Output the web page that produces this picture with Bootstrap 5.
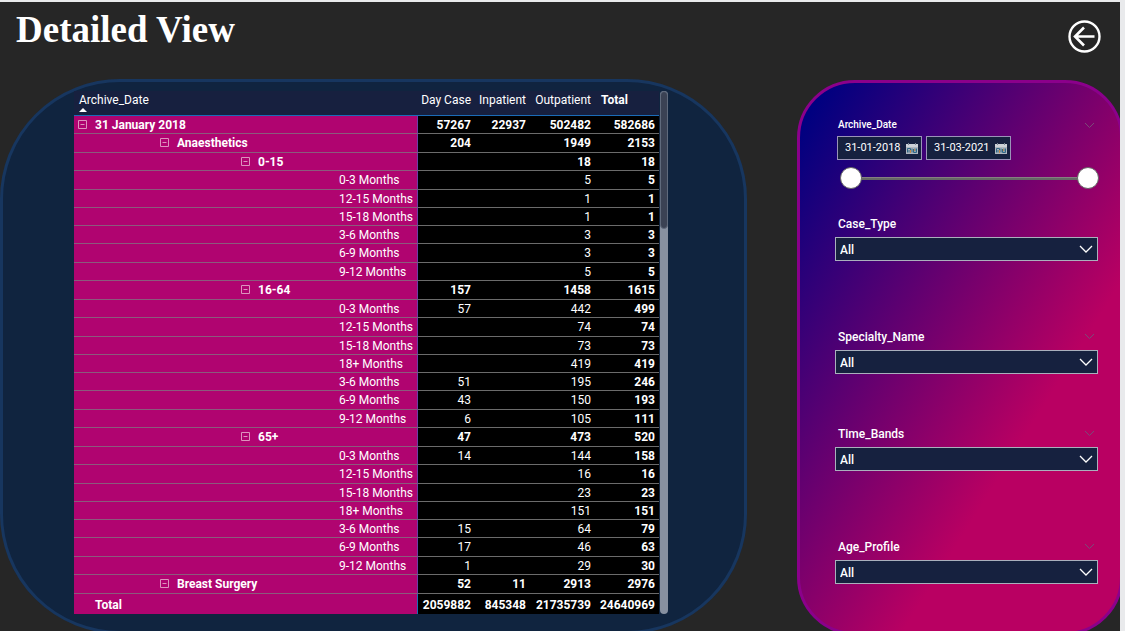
<!DOCTYPE html>
<html lang="en">
<head>
<meta charset="utf-8">
<meta name="viewport" content="width=device-width, initial-scale=1">
<title>Detailed View</title>
<link href="https://cdn.jsdelivr.net/npm/bootstrap@5.3.0/dist/css/bootstrap.min.css" rel="stylesheet">
<style>
  body { background: #e9eaec; font-family: Roboto, "Open Sans", sans-serif; font-size: 12px; color: #fff; padding: 2px 5px 0 0; }
  .report { background: #262626; min-height: calc(100vh - 2px); }
  .report-head { height: 77px; padding: 6px 19px 0 16px; }
  .report-head h1 { font: bold 37px/44px "Liberation Serif", serif; }
  .back-btn { margin-top: 12px; width: 33px; height: 33px; }
  .report-body { display: grid; grid-template-columns: minmax(0, 747fr) minmax(0, 323fr); column-gap: 50px; }

  .matrix-panel { background: #10243f; border: 3px solid #17365f; border-radius: 120px; padding: 9px 76px 17px 71px; margin-bottom: -2px; }
  .matrix { width: 100%; table-layout: fixed; border-collapse: separate; border-spacing: 0; line-height: 16px; }
  .matrix .c-day { width: 58px; } .matrix .c-in { width: 55px; } .matrix .c-out { width: 65px; } .matrix .c-total { width: 63px; }
  .matrix th, .matrix td { padding: 0 4px 0 0; white-space: nowrap; border-bottom: 1px solid #6b6b6b; height: 18px; }
  .matrix td { background: #000; text-align: right; font-weight: 400; }
  .matrix td:not(:last-child), .matrix thead th { padding-right: 5px; }
  .matrix td:last-child, .matrix .grp td, .matrix .grp th { font-weight: 700; }
  .matrix thead th { background: #17203f; border-bottom-color: #1b6cb8; height: 25px; text-align: right; font-weight: 400; vertical-align: top; padding-top: 1px; }
  .matrix thead th:first-child { text-align: left; padding-left: 5px; }
  .matrix thead th:last-child { text-align: left; padding-left: 5px; font-weight: 700; }
  .matrix tbody th, .matrix tfoot th { background: #b00470; border-bottom-color: #8b5b7c; border-right: 1px solid #6b3fa8; font-weight: 400; padding-left: 265px; }
  .matrix tbody tr:nth-child(4n) > *, .matrix tbody tr:nth-child(8n+2) > * { height: 19px; }
  .matrix .lv1 th { padding-left: 4px; }
  .matrix .lv2 th { padding-left: 86px; }
  .matrix .lv3 th { padding-left: 167px; }
  .matrix tfoot > tr > * { height: 20px; border-bottom: 0; padding-top: 2px; }
  .matrix tfoot th { padding-left: 21px; border-right-color: #1b6cb8; }
  .sort-mark { display: block; width: 8px; height: 4px; background: #fff; clip-path: polygon(50% 0, 100% 100%, 0 100%); }
  .twisty { display: inline-block; width: 10px; height: 10px; margin-right: 7px; border: 0; padding: 0; background: none; color: #dd93bd; line-height: 0; vertical-align: -1px; }
  .twisty svg { display: block; }
  .scroll-track { flex: 0 0 8px; margin-left: 1px; background: #8790a0; border-radius: 4px; }
  .scroll-thumb { height: 138px; background: #3b4254; border: 1px solid #606a7c; border-radius: 4px; }

  .slicer-panel { margin: 1px -3px -3px 0; border: 3px solid #8b008b; border-radius: 58px; padding: 34px 22px 47px 35px;
    background: linear-gradient(122deg, #000080 5%, #b90062 67%) border-box; }
  .slicer-head { height: 16px; line-height: 16px; padding: 0 3px; margin-bottom: 5px; }
  .slicer-head label, .slicer-head legend { font-size: 12px; font-weight: 500; line-height: 16px; margin: 0; }
  .date-slicer .slicer-head { margin-bottom: 3px; }
  .date-slicer .slicer-head legend { font-size: 10px; }
  .chev { color: #7a4a78; }
  .slicer-gap { margin-top: 68px; }
  .slicer-gap-sm { margin-top: 52px; }
  .slicer .form-select { height: 24px; border: 1px solid #aab0bd; border-radius: 0; padding: 1px 24px 0 4px; font-size: 12px; font-weight: 500; line-height: 20px; color: #fff;
    background: #16213f url("data:image/svg+xml,%3Csvg xmlns='http://www.w3.org/2000/svg' width='14' height='8'%3E%3Cpath d='M1 1l6 6 6-6' fill='none' stroke='%23fff' stroke-width='1.3'/%3E%3C/svg%3E") no-repeat right 4px center / 14px 8px; }
  .date-row { margin-left: 2px; }
  .date-box { width: 85px; height: 24px; background: #16213f; border: 1px solid #9a94b8; padding: 0 3px 0 7px; }
  .date-box input { width: 61px; border: 0; padding: 0; background: none; color: #fff; font-size: 11px; line-height: 20px; outline: 0; }
  .date-box svg { flex: none; }
  .dual-range { position: relative; height: 22px; margin: 7px 0 27px; }
  .dual-range::before { content: ""; position: absolute; left: 16px; right: 16px; top: 10px; height: 3px; background: #666; border-top: 1px solid #858080; }
  .dual-range input { position: absolute; left: 5px; width: calc(100% - 4px); top: 0; height: 22px; margin: 0; background: none; appearance: none; -webkit-appearance: none; pointer-events: none; }
  .dual-range input::-webkit-slider-thumb { -webkit-appearance: none; width: 22px; height: 22px; border-radius: 50%; background: #fff; border: 1px solid #666; pointer-events: auto; }
</style>
</head>
<body>
<svg class="d-none">
  <symbol id="minus-box" viewBox="0 0 10 10"><path d="M.5 .5h8v8h-8z M2.500 4.500h4" fill="none" stroke="currentColor"/></symbol>
  <symbol id="chev-down" viewBox="0 0 11 7"><path d="M1 1l4.500 4.500L10 1" fill="none" stroke="currentColor"/></symbol>
  <symbol id="calendar" viewBox="0 0 12 11">
    <path d="M0 1h12v10H0z" fill="#aeb6bf"/><path d="M0 1h12v3H0z" fill="#cdd2d8"/><path d="M2 0h1v2H2zM9 0h1v2H9z" fill="#7b8794"/>
    <path d="M1.500 9.500v-4h3v4M3 7v2.500M6 5.500v4M7.500 6v3.500h3v-4M9 5.500v3" fill="none" stroke="#2f6683"/><path d="M4 7h1v3H4zM8 6h1v2H8z" fill="#c58a4a"/>
  </symbol>
</svg>
<main class="report overflow-hidden">
  <header class="report-head d-flex justify-content-between align-items-start">
    <h1 class="m-0">Detailed View</h1>
    <button type="button" class="back-btn btn p-0 border-0 lh-1" aria-label="Back">
      <svg class="d-block" width="33" height="33" viewBox="0 0 33 33" fill="none" stroke="#fff" stroke-width="2.400"><circle cx="16.500" cy="16.500" r="15"/><path d="M26.500 16.500H7.500M16 7.500l-9 9 9 9" stroke-width="2.600"/></svg>
    </button>
  </header>
  <div class="report-body">
    <section class="matrix-panel d-flex align-items-stretch">
      <div class="flex-grow-1">
      <table class="matrix">
        <colgroup><col><col class="c-day"><col class="c-in"><col class="c-out"><col class="c-total"></colgroup>
        <thead><tr><th scope="col">Archive_Date<span class="sort-mark"></span></th><th scope="col">Day Case</th><th scope="col">Inpatient</th><th scope="col">Outpatient</th><th scope="col">Total</th></tr></thead>
        <tbody>
          <tr class="grp lv1"><th scope="row"><button class="twisty" aria-label="Collapse"><svg width="10" height="10"><use href="#minus-box"/></svg></button>31 January 2018</th><td>57267</td><td>22937</td><td>502482</td><td>582686</td></tr>
          <tr class="grp lv2"><th scope="row"><button class="twisty" aria-label="Collapse"><svg width="10" height="10"><use href="#minus-box"/></svg></button>Anaesthetics</th><td>204</td><td></td><td>1949</td><td>2153</td></tr>
          <tr class="grp lv3"><th scope="row"><button class="twisty" aria-label="Collapse"><svg width="10" height="10"><use href="#minus-box"/></svg></button>0-15</th><td></td><td></td><td>18</td><td>18</td></tr>
          <tr><th scope="row">0-3 Months</th><td></td><td></td><td>5</td><td>5</td></tr>
          <tr><th scope="row">12-15 Months</th><td></td><td></td><td>1</td><td>1</td></tr>
          <tr><th scope="row">15-18 Months</th><td></td><td></td><td>1</td><td>1</td></tr>
          <tr><th scope="row">3-6 Months</th><td></td><td></td><td>3</td><td>3</td></tr>
          <tr><th scope="row">6-9 Months</th><td></td><td></td><td>3</td><td>3</td></tr>
          <tr><th scope="row">9-12 Months</th><td></td><td></td><td>5</td><td>5</td></tr>
          <tr class="grp lv3"><th scope="row"><button class="twisty" aria-label="Collapse"><svg width="10" height="10"><use href="#minus-box"/></svg></button>16-64</th><td>157</td><td></td><td>1458</td><td>1615</td></tr>
          <tr><th scope="row">0-3 Months</th><td>57</td><td></td><td>442</td><td>499</td></tr>
          <tr><th scope="row">12-15 Months</th><td></td><td></td><td>74</td><td>74</td></tr>
          <tr><th scope="row">15-18 Months</th><td></td><td></td><td>73</td><td>73</td></tr>
          <tr><th scope="row">18+ Months</th><td></td><td></td><td>419</td><td>419</td></tr>
          <tr><th scope="row">3-6 Months</th><td>51</td><td></td><td>195</td><td>246</td></tr>
          <tr><th scope="row">6-9 Months</th><td>43</td><td></td><td>150</td><td>193</td></tr>
          <tr><th scope="row">9-12 Months</th><td>6</td><td></td><td>105</td><td>111</td></tr>
          <tr class="grp lv3"><th scope="row"><button class="twisty" aria-label="Collapse"><svg width="10" height="10"><use href="#minus-box"/></svg></button>65+</th><td>47</td><td></td><td>473</td><td>520</td></tr>
          <tr><th scope="row">0-3 Months</th><td>14</td><td></td><td>144</td><td>158</td></tr>
          <tr><th scope="row">12-15 Months</th><td></td><td></td><td>16</td><td>16</td></tr>
          <tr><th scope="row">15-18 Months</th><td></td><td></td><td>23</td><td>23</td></tr>
          <tr><th scope="row">18+ Months</th><td></td><td></td><td>151</td><td>151</td></tr>
          <tr><th scope="row">3-6 Months</th><td>15</td><td></td><td>64</td><td>79</td></tr>
          <tr><th scope="row">6-9 Months</th><td>17</td><td></td><td>46</td><td>63</td></tr>
          <tr><th scope="row">9-12 Months</th><td>1</td><td></td><td>29</td><td>30</td></tr>
          <tr class="grp lv2"><th scope="row"><button class="twisty" aria-label="Collapse"><svg width="10" height="10"><use href="#minus-box"/></svg></button>Breast Surgery</th><td>52</td><td>11</td><td>2913</td><td>2976</td></tr>
        </tbody>
        <tfoot><tr class="grp"><th scope="row">Total</th><td>2059882</td><td>845348</td><td>21735739</td><td>24640969</td></tr></tfoot>
      </table>
      </div>
      <div class="scroll-track"><div class="scroll-thumb"></div></div>
    </section>

    <aside class="slicer-panel">
      <fieldset class="date-slicer">
        <div class="slicer-head d-flex justify-content-between align-items-center"><legend class="w-auto">Archive_Date</legend><svg class="chev" width="11" height="7"><use href="#chev-down"/></svg></div>
        <div class="d-flex gap-1 date-row">
          <div class="date-box d-flex align-items-center"><input type="text" value="31-01-2018" aria-label="Start date"><svg width="12" height="11"><use href="#calendar"/></svg></div>
          <div class="date-box d-flex align-items-center"><input type="text" value="31-03-2021" aria-label="End date"><svg width="12" height="11"><use href="#calendar"/></svg></div>
        </div>
        <div class="dual-range">
          <input type="range" min="0" max="100" value="0" aria-label="Range start">
          <input type="range" min="0" max="100" value="100" aria-label="Range end">
        </div>
      </fieldset>
      <div class="slicer">
        <div class="slicer-head"><label for="caseType">Case_Type</label></div>
        <select class="form-select" id="caseType"><option>All</option></select>
      </div>
      <div class="slicer slicer-gap">
        <div class="slicer-head d-flex justify-content-between"><label for="specialty">Specialty_Name</label><svg class="chev mt-1" width="11" height="7"><use href="#chev-down"/></svg></div>
        <select class="form-select" id="specialty"><option>All</option></select>
      </div>
      <div class="slicer slicer-gap-sm">
        <div class="slicer-head d-flex justify-content-between"><label for="bands">Time_Bands</label><svg class="chev mt-1" width="11" height="7"><use href="#chev-down"/></svg></div>
        <select class="form-select" id="bands"><option>All</option></select>
      </div>
      <div class="slicer slicer-gap">
        <div class="slicer-head d-flex justify-content-between"><label for="age">Age_Profile</label><svg class="chev mt-1" width="11" height="7"><use href="#chev-down"/></svg></div>
        <select class="form-select" id="age"><option>All</option></select>
      </div>
    </aside>
  </div>
</main>
<script src="https://cdn.jsdelivr.net/npm/bootstrap@5.3.0/dist/js/bootstrap.bundle.min.js"></script>
</body>
</html>
